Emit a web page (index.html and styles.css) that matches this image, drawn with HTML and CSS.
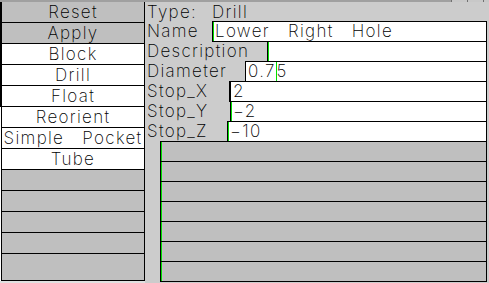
FILE: index.html
```html
<!DOCTYPE html>
<html>
<head>
<meta charset="utf-8">
<link rel="stylesheet" href="styles.css">
</head>
<body>
<div class="topbar">
  <span class="tb-fill"></span>
  <span class="tb-box"></span>
  <span class="tb-box"></span>
  <span class="tb-box tb-last"></span>
</div>
<div class="main">
  <div class="edge"></div>
  <div class="menu">
    <div class="btn gray">Reset</div>
    <div class="btn gray">Apply</div>
    <div class="btn">Block</div>
    <div class="btn">Drill</div>
    <div class="btn">Float</div>
    <div class="btn">Reorient</div>
    <div class="btn">Simple&nbsp; Pocket</div>
    <div class="btn">Tube</div>
    <div class="btn gray"></div>
    <div class="btn gray"></div>
    <div class="btn gray"></div>
    <div class="btn gray"></div>
    <div class="btn gray last"></div>
  </div>
  <div class="panel">
    <div class="type-row">Type: Drill</div>
    <div class="row"><span class="lbl l-name">Name</span><span class="field cursor">Lower&nbsp; Right&nbsp; Hole</span></div>
    <div class="row"><span class="lbl l-desc">Description</span><span class="field cursor"></span></div>
    <div class="row"><span class="lbl l-diam">Diameter</span><span class="field">0.7<span class="caret"></span>5</span></div>
    <div class="row"><span class="lbl l-x">Stop_X</span><span class="field thick">2</span></div>
    <div class="row"><span class="lbl l-y">Stop_Y</span><span class="field cursor">−2</span></div>
    <div class="row"><span class="lbl l-z">Stop_Z</span><span class="field cursor">−10</span></div>
    <div class="list">
      <div class="li"></div>
      <div class="li"></div>
      <div class="li"></div>
      <div class="li"></div>
      <div class="li"></div>
      <div class="li"></div>
      <div class="li last"></div>
    </div>
  </div>
</div>
</body>
</html>
```
FILE: styles.css
```css
* { box-sizing: border-box; }
html, body {
  margin: 0;
  padding: 0;
}
body {
  width: 489px;
  height: 283px;
  overflow: hidden;
  background: #ffffff;
  font-family: "Inter", "DejaVu Sans", sans-serif;
  font-weight: 200;
  font-size: 17px;
  letter-spacing: 1.3px;
  word-spacing: 3px;
  color: #000;
}
.topbar {
  height: 2px;
  display: flex;
  background: #a0a0a0;
}
.tb-fill { flex: 1; }
.tb-box {
  width: 16px;
  height: 2px;
  background: #c8c8c8;
  border-left: 1px solid #707070;
}
.tb-last { width: 6px; }
.main {
  display: flex;
  height: 281px;
  background: #e0e0e0;
}
.edge {
  width: 1px;
  background: linear-gradient(#000 0 105px, #fff 105px 279px, #e0e0e0 279px);
}
.menu {
  width: 144px;
  height: 279px;
  display: flex;
  flex-direction: column;
  border-left: 1px solid #000;
  border-right: 1px solid #000;
  border-bottom: 1px solid #000;
}
.btn {
  height: 21px;
  border-bottom: 1px solid #000;
  background: #fff;
  text-align: center;
  line-height: 21px;
  white-space: nowrap;
}
.btn.gray { background: #bfbfbf; }
.btn.last {
  flex: 1;
  border-bottom: none;
}
.panel {
  flex: 1;
  background: #cccccc;
  padding-right: 2px;
  display: flex;
  flex-direction: column;
}
.type-row {
  height: 19px;
  line-height: 20px;
  padding-left: 2px;
  white-space: nowrap;
  word-spacing: 9px;
}
.row {
  height: 20px;
  display: flex;
}
.lbl {
  padding-left: 2px;
  line-height: 21px;
  white-space: nowrap;
}
.l-name { width: 67px; }
.l-desc { width: 122px; }
.l-diam { width: 100px; }
.l-x { width: 84px; }
.l-y { width: 85px; }
.l-z { width: 82px; }
.field {
  flex: 1;
  height: 21px;
  border: 1px solid #000;
  background: #fff;
  line-height: 19px;
  padding-left: 2px;
  white-space: nowrap;
}
.field.cursor { box-shadow: inset 1px 0 0 #00e000; }
.field.thick { border-left-width: 2px; }
.caret {
  display: inline-block;
  width: 0;
  height: 19px;
  vertical-align: top;
  border-left: 1px solid #00e000;
}
.list {
  margin-left: 15px;
  height: 141px;
  border: 1px solid #000;
  background: #bfbfbf;
  box-shadow: inset 1px 0 0 #00e000;
  display: flex;
  flex-direction: column;
}
.li {
  height: 20px;
  border-bottom: 1px solid #000;
}
.li.last {
  flex: 1;
  border-bottom: none;
}
```
